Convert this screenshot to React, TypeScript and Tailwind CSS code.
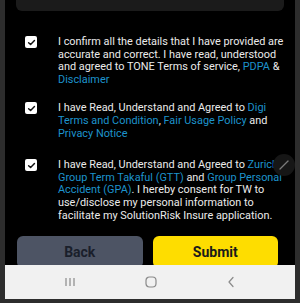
import React from "react";

function Check() {
  return (
    <div className="w-[12px] h-[12px] bg-white rounded-[2px] flex items-center justify-center shrink-0 mt-[0px]">
      <svg width="9" height="9" viewBox="0 0 10 10">
        <path d="M1.8 5.2 L4 7.3 L8.3 2.8" fill="none" stroke="#111" strokeWidth="1.6" strokeLinecap="round" strokeLinejoin="round" />
      </svg>
    </div>
  );
}

const L = ({ children }: { children: React.ReactNode }) => (
  <span className="text-[#1d93cc]">{children}</span>
);

export default function App() {
  return (
    <div className="w-[300px] h-[303px] bg-[#2d2d2d] flex flex-col" style={{ fontFamily: "Roboto, 'Liberation Sans', sans-serif" }}>
      <div className="mx-[5px] h-[299px] bg-black flex flex-col overflow-hidden relative">
        <div className="flex-1 overflow-hidden flex flex-col">
          <div className="mx-[11px] h-[11px] bg-[#1b1b1b] rounded-b-[6px] shrink-0" />
          <div className="flex flex-col pl-[20px] pr-[6px] pt-[25px] gap-[16px] text-[10.9px] leading-[12.6px] text-[#ebebeb]">
            <div className="flex gap-[21px]">
              <Check />
              <p>
                I confirm all the details that I have provided are accurate and correct. I have read, understood and agreed to TONE Terms of service, <L>PDPA</L> &amp; <L>Disclaimer</L>
              </p>
            </div>
            <div className="flex gap-[21px]">
              <Check />
              <p>
                I have Read, Understand and Agreed to <L>Digi Terms and Condition</L>, <L>Fair Usage Policy</L> and <L>Privacy Notice</L>
              </p>
            </div>
            <div className="flex gap-[21px] pt-[3px]">
              <Check />
              <p>
                I have Read, Understand and Agreed to <L>Zurich Group Term Takaful (GTT)</L> and <L>Group Personal Accident (GPA)</L>. I hereby consent for TW to use/disclose my personal information to facilitate my SolutionRisk Insure application.
              </p>
            </div>
          </div>
          <div className="flex gap-[10px] pl-[12px] pr-[17px] mt-[14px]">
            <button className="flex-1 h-[32px] rounded-[6px] bg-[#4d5464] text-[#1a1f2b] font-bold text-[14px]">Back</button>
            <button className="flex-1 h-[32px] rounded-[6px] bg-[#fedd00] text-[#1a1a1a] font-bold text-[14px]">Submit</button>
          </div>
        </div>
        <div className="absolute right-[0px] top-[154px] w-[22px] h-[22px] rounded-full bg-[#161616] flex items-center justify-center">
          <svg width="12" height="12" viewBox="0 0 12 12">
            <path d="M2 10 L10 2" stroke="#7a7a7a" strokeWidth="1.3" strokeLinecap="round" />
          </svg>
        </div>
        <div className="h-[34px] bg-[#f1f1f1] shrink-0 flex items-center justify-between px-[59px]">
          <svg width="12" height="10" viewBox="0 0 12 10">
            <path d="M2 1 V9 M6 1 V9 M10 1 V9" stroke="#8a8a8a" strokeWidth="1.2" />
          </svg>
          <svg width="12" height="12" viewBox="0 0 12 12">
            <rect x="1" y="1" width="10" height="10" rx="3.5" fill="none" stroke="#8a8a8a" strokeWidth="1.2" />
          </svg>
          <svg width="10" height="12" viewBox="0 0 10 12">
            <path d="M7 1.5 L3 6 L7 10.5" fill="none" stroke="#8a8a8a" strokeWidth="1.2" strokeLinecap="round" strokeLinejoin="round" />
          </svg>
        </div>
      </div>
    </div>
  );
}
